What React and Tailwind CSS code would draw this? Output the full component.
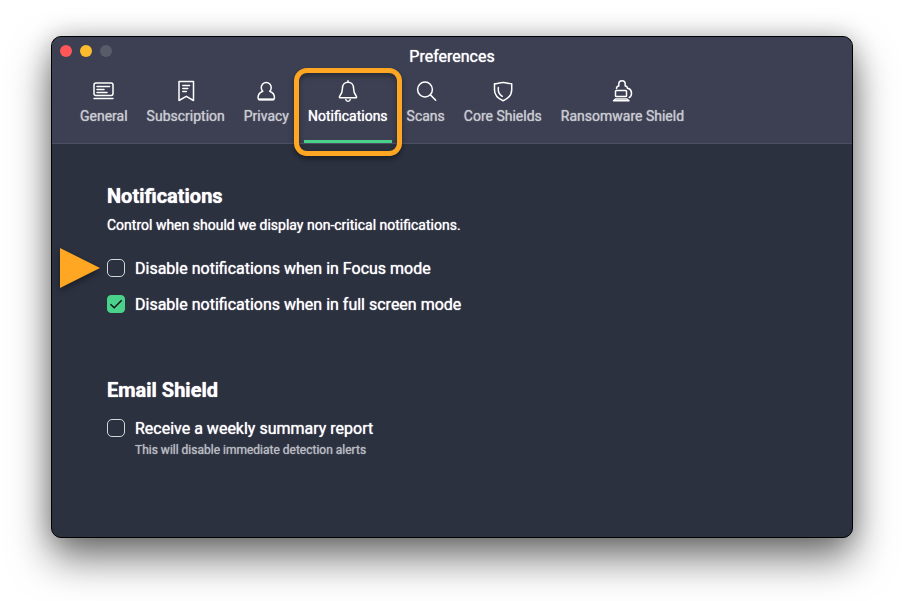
import { useState } from "react";

const tabs = [
  {
    id: "general",
    label: "General",
    icon: (
      <>
        <rect x="2" y="4" width="19" height="12.5" rx="2" />
        <path d="M5 7.5h12.5M5 10.5h7M5 13.5h10M2 19.5h19" />
      </>
    ),
  },
  {
    id: "subscription",
    label: "Subscription",
    icon: (
      <>
        <path d="M5 2.5h14.5v19l-7.2-4.2L5 21.5z" />
        <path d="M8.8 6.5h6.8M8.8 9.5h5M8.8 12.5h3.5" />
      </>
    ),
  },
  {
    id: "privacy",
    label: "Privacy",
    icon: (
      <>
        <path d="M8.8 12.2a5 5 0 1 1 6.9 0c2.8 1 4.8 3.5 4.8 6.6 0 1.1-.5 1.7-1.6 1.7H5.6c-1.1 0-1.6-.6-1.6-1.7 0-3.1 2-5.6 4.8-6.6z" />
        <path d="M5 20.5h14.5" strokeWidth="2" />
      </>
    ),
  },
  {
    id: "notifications",
    label: "Notifications",
    icon: (
      <>
        <path d="M12 1.8v1.5M12 3.3c-3.6 0-5.5 2.6-5.5 5.7 0 4-1 6-2.8 8.3-.6.8-.2 1.5.7 1.5h15.2c.9 0 1.3-.7.7-1.5-1.8-2.3-2.8-4.3-2.8-8.3 0-3.1-1.9-5.7-5.5-5.7z" />
        <path d="M9.8 20.5c.2 1.2 1 1.8 2.2 1.8s2-.6 2.2-1.8" />
      </>
    ),
  },
  {
    id: "scans",
    label: "Scans",
    icon: (
      <>
        <circle cx="11" cy="10.5" r="7.4" />
        <path d="M16.4 15.9l5.3 5.3" />
      </>
    ),
  },
  {
    id: "core",
    label: "Core Shields",
    icon: (
      <>
        <path d="M3.5 4.8c3-.2 5.5-1.2 8.6-1.2s5.6 1 8.6 1.2V11c0 5-3.5 8.5-8.6 10.8C7 19.500 3.500 16 3.500 11z" />
        <path d="M7.3 8.5V11c0 2.800 1.500 4.700 4 6.300" />
      </>
    ),
  },
  {
    id: "ransomware",
    label: "Ransomware Shield",
    icon: (
      <>
        <rect x="5.5" y="11.5" width="11" height="6" rx="0.8" />
        <path d="M6.5 9.5c0-1.5.8-2.3 2.300-2.500V5.100c0-4.400 6.400-4.400 6.400 0V7c1.500.2 2.300 1 2.300 2.500" />
        <path d="M18.5 9.500c2 .8 3 2.500 3 4.700 0 2-.8 3.600-2.300 4.300" />
        <path d="M5.5 20h11.500l2 1.800H3.500z" />
      </>
    ),
  },
];

function Tab({ label, icon, active, onClick }) {
  return (
    <button
      type="button"
      role="tab"
      aria-selected={active}
      onClick={onClick}
      className={`relative flex flex-col items-center border-b-[3px] px-1 pb-3.5 text-sm leading-5 whitespace-nowrap [text-shadow:0_0_1px_currentColor] ${
        active ? "border-[#4bd28a] text-white" : "border-transparent text-[#c8cad0]"
      }`}
    >
      <svg viewBox="0 0 24 24" className="mb-[3px] size-6 text-white" fill="none" stroke="currentColor" strokeWidth="1.5" strokeLinecap="round" strokeLinejoin="round" aria-hidden="true">
        {icon}
      </svg>
      {label}
      {active && (
        <span className="pointer-events-none absolute -inset-x-2.5 -top-[11px] -bottom-4 rounded-[13px] border-5 border-[#ffa722] shadow-[0_3px_5px_rgba(0,0,0,0.4),inset_0_3px_5px_rgba(0,0,0,0.35)]" />
      )}
    </button>
  );
}

function Option({ id, label, hint, pointed, defaultChecked }) {
  return (
    <div className="relative">
      {pointed && (
        <svg viewBox="0 0 40 40" className="absolute -top-[7px] -left-[47px] size-10 drop-shadow-[0_3px_3px_rgba(0,0,0,0.4)]" aria-hidden="true">
          <path d="M0 0l40 20L0 40z" fill="#ffa722" />
        </svg>
      )}
      <div className="flex items-center gap-2.5">
        <span className="relative flex size-[18px] shrink-0">
          <input
            id={id}
            type="checkbox"
            defaultChecked={defaultChecked}
            className="peer size-[18px] appearance-none rounded-[5px] border border-[#d5d6da] checked:rounded-sm checked:border-[#4bd28a] checked:bg-[#4bd28a]"
          />
          <svg viewBox="0 0 18 18" className="pointer-events-none absolute inset-0 hidden peer-checked:block" fill="none" stroke="#10151c" strokeWidth="1.5" aria-hidden="true">
            <path d="M3.5 9.2l3.7 3.5 7.5-7.4" />
          </svg>
        </span>
        <label htmlFor={id} className="pt-0.5 text-base leading-6">
          {label}
        </label>
      </div>
      {hint && <p className="mt-px ml-7 text-xs leading-4 text-[#b9bcc2]">{hint}</p>}
    </div>
  );
}

export default function App() {
  const [current, setCurrent] = useState("notifications");

  return (
    <div className="flex min-h-screen bg-white pt-9 pr-[58px] pb-[63px] pl-[51px] font-[Roboto,sans-serif] text-white">
      <div className="flex-1 rounded-[10px] border border-black bg-[#2b313f] shadow-[0_20px_40px_rgba(0,0,0,0.55),0_0_24px_rgba(0,0,0,0.2)] [text-shadow:0_0_1px_currentColor]">
        <header className="rounded-t-[9px] border-b border-[#4b5063] bg-[#3c4052]">
          <div className="grid grid-cols-3 px-2 pt-2">
            <div className="flex gap-2">
              <button type="button" aria-label="Close" className="size-3 rounded-full bg-[#ff5757]" />
              <button type="button" aria-label="Minimize" className="size-3 rounded-full bg-[#fdbc2e]" />
              <button type="button" aria-label="Zoom" className="size-3 rounded-full bg-[#585c68]" />
            </div>
            <h1 className="text-center text-base leading-6">Preferences</h1>
          </div>
          <nav role="tablist" className="flex gap-[11px] px-6 pt-2.5">
            {tabs.map((tab) => (
              <Tab
                key={tab.id}
                label={tab.label}
                icon={tab.icon}
                active={tab.id === current}
                onClick={() => setCurrent(tab.id)}
              />
            ))}
          </nav>
        </header>

        <main className="px-[55px] pt-[38px] pb-10">
          <section>
            <h2 className="text-xl leading-7 font-bold">Notifications</h2>
            <p className="mt-[5px] text-sm leading-5">
              Control when should we display non-critical notifications.
            </p>
            <div className="mt-5 flex flex-col gap-2.5">
              <Option id="focus" label="Disable notifications when in Focus mode" pointed />
              <Option id="fullscreen" label="Disable notifications when in full screen mode" defaultChecked />
            </div>
          </section>

          <section className="mt-[59px]">
            <h2 className="mb-[11px] text-xl leading-7 font-bold">Email Shield</h2>
            <Option id="weekly" label="Receive a weekly summary report" hint="This will disable immediate detection alerts" />
          </section>
        </main>
      </div>
    </div>
  );
}
